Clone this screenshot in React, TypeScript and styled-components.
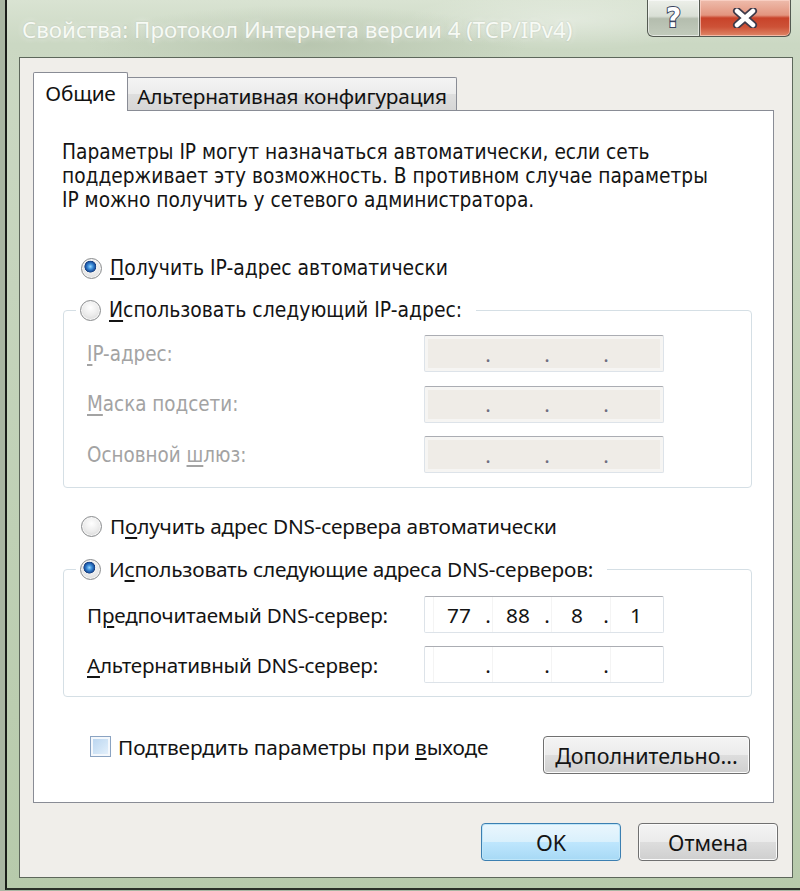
import React from "react";
import styled, { createGlobalStyle, css } from "styled-components";

const tahoma = `"DejaVu Sans Condensed", "DejaVu Sans", Verdana, sans-serif`;
const segoe = `"Noto Sans", "Open Sans", "Liberation Sans", sans-serif`;

const GlobalStyle = createGlobalStyle`
  html, body {
    margin: 0;
    padding: 0;
  }
  body {
    width: 800px;
    height: 891px;
    overflow: hidden;
    background: #a9b6a2;
  }
`;

const Window = styled.div`
  box-sizing: border-box;
  margin-left: 5px;
  width: 795px;
  height: 890px;
  padding-left: 12px;
  border-left: 2px solid #1b1e1a;
  border-bottom: 2px solid #2b3029;
  background:
    radial-gradient(ellipse 220px 40px at 300px 45px, rgba(150, 165, 140, 0.35), transparent),
    radial-gradient(ellipse 160px 30px at 560px 20px, rgba(255, 255, 255, 0.35), transparent),
    linear-gradient(180deg, #d9e3d2 0%, #cbd8c3 5%, #bfd0b5 60%, #b7caab 100%);
  display: flex;
  flex-direction: column;
`;

const TitleBar = styled.div`
  height: 57px;
  display: flex;
  align-items: flex-start;
`;

const Title = styled.div`
  margin: 16px 0 0 3px;
  font-family: ${segoe};
  font-size: 22.3px;
  line-height: 28px;
  color: #f7faf5;
  text-shadow: 0 0 6px rgba(255, 255, 255, 0.7), 0 0 2px rgba(120, 140, 115, 0.5);
  white-space: nowrap;
`;

const CaptionButtons = styled.div`
  margin-left: auto;
  margin-right: 9px;
  display: flex;
  height: 37px;
`;

const CaptionButton = styled.div<{ $close?: boolean }>`
  box-sizing: border-box;
  height: 37px;
  display: flex;
  align-items: center;
  justify-content: center;
  border: 1px solid #545a52;
  border-top: none;
  ${({ $close }) =>
    $close
      ? css`
          width: 91px;
          border-left: none;
          border-radius: 0 0 6px 0;
          background: linear-gradient(
            180deg,
            #eebcac 0%,
            #e3957f 42%,
            #c8432a 50%,
            #cd5237 75%,
            #df8667 100%
          );
          box-shadow: inset 0 0 0 1px rgba(255, 220, 210, 0.6);
        `
      : css`
          width: 53px;
          border-radius: 0 0 0 6px;
          background: linear-gradient(
            180deg,
            #edf0ea 0%,
            #d9dfd5 45%,
            #b4bdae 52%,
            #c2cbbc 100%
          );
          box-shadow: inset 0 0 0 1px rgba(255, 255, 255, 0.55);
        `}
`;

const HelpGlyph = styled.span`
  font-family: "DejaVu Sans", sans-serif;
  font-weight: bold;
  font-size: 26px;
  color: #fff;
  -webkit-text-stroke: 2px #3a4560;
  paint-order: stroke fill;
`;

const Content = styled.div`
  box-sizing: border-box;
  width: 774px;
  height: 821px;
  border: 1px solid #5d675b;
  background: #f0eeea;
  padding: 14px 18px 0 13px;
  display: flex;
  flex-direction: column;
`;

const TabStrip = styled.div`
  height: 38px;
  display: flex;
  align-items: flex-end;
`;

const Tab = styled.div<{ $active?: boolean }>`
  box-sizing: border-box;
  display: flex;
  align-items: center;
  justify-content: center;
  font-family: ${segoe};
  font-size: 20.8px;
  letter-spacing: -0.2px;
  color: #111;
  border: 1px solid #898c95;
  border-bottom: none;
  ${({ $active }) =>
    $active
      ? css`
          position: relative;
          z-index: 1;
          width: 95px;
          height: 39px;
          margin-bottom: -1px;
          padding-top: 2px;
          background: #fff;
          border-radius: 2px 2px 0 0;
        `
      : css`
          width: 329px;
          height: 33px;
          padding-top: 4px;
          border-left: none;
          border-radius: 0 2px 0 0;
          background: linear-gradient(180deg, #f4f4f4 0%, #ececec 50%, #dedede 51%, #d6d6d6 100%);
        `}
`;

const TabPanel = styled.div`
  box-sizing: border-box;
  height: 693px;
  border: 1px solid #898c95;
  background: #fff;
  padding: 29px 21px 0 29px;
  display: flex;
  flex-direction: column;
`;

const Intro = styled.p`
  margin: 0 0 0 -1px;
  font-family: ${tahoma};
  font-size: 20.7px;
  line-height: 24px;
  color: #141414;
`;

const RadioRow = styled.label<{ $top?: number; $segoe?: boolean }>`
  display: flex;
  align-items: center;
  gap: 8px;
  height: 24px;
  margin-top: ${({ $top }) => $top ?? 0}px;
  margin-left: 18px;
  font-family: ${({ $segoe }) => ($segoe ? segoe : tahoma)};
  font-size: ${({ $segoe }) => ($segoe ? "20.8px" : "20.9px")};
  letter-spacing: ${({ $segoe }) => ($segoe ? "-0.2px" : "0")};
  color: #141414;
  white-space: nowrap;
`;

const RadioDot = styled.span<{ $checked?: boolean }>`
  flex: none;
  box-sizing: border-box;
  width: 21px;
  height: 21px;
  border-radius: 50%;
  border: 1px solid #8a8c8e;
  box-shadow: inset 0 0 0 1px #f6f6f6;
  background: ${({ $checked }) =>
    $checked
      ? `radial-gradient(circle at 44% 40%, #9ad8ff 0, #3d8fdb 2.5px, #1a4f9c 5px, #143c7a 5.6px, rgba(20,60,122,0) 6.2px),
         radial-gradient(circle at 50% 40%, #ffffff 0, #e9e9e9 55%, #cdcdcd 100%)`
      : `radial-gradient(circle at 50% 35%, #ffffff 0, #ececec 50%, #cfcfcf 100%)`};
`;

const Group = styled.fieldset<{ $top: number; $pt: number; $pb: number }>`
  margin: ${({ $top }) => $top}px 0 0 0;
  padding: ${({ $pt, $pb }) => `${$pt}px 0 ${$pb}px 23px`};
  min-width: 0;
  border: 1px solid #d5dfe5;
  border-radius: 4px;
`;

const Legend = styled.legend`
  margin-left: -11px;
  padding: 0 14px 0 0;

  ${RadioRow} {
    margin-left: 0;
    padding-left: 4px;
  }
`;

const FieldGrid = styled.div<{ $gap: number }>`
  display: grid;
  grid-template-columns: 337px 240px;
  row-gap: ${({ $gap }) => $gap}px;
  align-items: center;
`;

const FieldLabel = styled.span<{ $disabled?: boolean }>`
  font-family: ${({ $disabled }) => ($disabled ? tahoma : segoe)};
  font-size: ${({ $disabled }) => ($disabled ? "20.4px" : "20.6px")};
  letter-spacing: ${({ $disabled }) => ($disabled ? "0" : "-0.2px")};
  color: ${({ $disabled }) => ($disabled ? "#a3a3a3" : "#141414")};
  white-space: nowrap;
`;

const IpBox = styled.div<{ $disabled?: boolean }>`
  box-sizing: border-box;
  width: 240px;
  height: 37px;
  padding-left: 8px;
  display: flex;
  align-items: center;
  border: 1px solid #dde3e9;
  border-top-color: #abadb3;
  border-radius: 2px;
  font-family: ${segoe};
  font-size: 20.8px;
  color: ${({ $disabled }) => ($disabled ? "#6e6e80" : "#141414")};
  background: ${({ $disabled }) => ($disabled ? "#efece7" : "#fff")};
  box-shadow: ${({ $disabled }) => ($disabled ? "inset 0 0 0 3px #f6f5f3" : "none")};
`;

const Octet = styled.span<{ $disabled?: boolean }>`
  width: 50px;
  align-self: stretch;
  display: flex;
  align-items: center;
  justify-content: center;
  border-left: 1px solid ${({ $disabled }) => ($disabled ? "transparent" : "#f4f4f4")};
`;

const Dot = styled.span`
  width: 8px;
  text-align: center;
`;

const BottomRow = styled.div`
  margin-top: 38px;
  display: flex;
  align-items: flex-start;
`;

const CheckLabel = styled.label`
  margin-left: 27px;
  display: flex;
  align-items: center;
  gap: 7px;
  height: 23px;
  font-family: ${segoe};
  font-size: 20.8px;
  letter-spacing: -0.1px;
  color: #141414;
  white-space: nowrap;
`;

const CheckBox = styled.span`
  flex: none;
  box-sizing: border-box;
  width: 21px;
  height: 21px;
  border: 1px solid #8aa3c2;
  box-shadow: inset 0 0 0 2px #f4f8fc;
  background: linear-gradient(135deg, #b7d3ee 0%, #d3e6f7 60%, #e9f3fc 100%);
`;

const Button = styled.button<{ $default?: boolean; $w: number }>`
  box-sizing: border-box;
  width: ${({ $w }) => $w}px;
  height: 38px;
  padding: 0;
  font-family: ${segoe};
  font-size: 21.5px;
  color: #141414;
  border-radius: 4px;
  border: 1px solid ${({ $default }) => ($default ? "#3c7fb1" : "#707070")};
  background: ${({ $default }) =>
    $default
      ? "linear-gradient(180deg, #eaf6fd 0%, #d9f0fc 50%, #bee6fd 51%, #a7d9f5 100%)"
      : "linear-gradient(180deg, #f4f4f4 0%, #ebebeb 50%, #dddddd 51%, #cfcfcf 100%)"};
  box-shadow: inset 0 0 0 1px ${({ $default }) => ($default ? "#bfe6f9" : "#fbfbfb")};
`;

const MoreButton = styled(Button)`
  margin-left: auto;
  margin-top: 1px;
  margin-right: 2px;
`;

const DialogButtons = styled.div`
  margin-top: 20px;
  margin-right: -4px;
  display: flex;
  justify-content: flex-end;
  gap: 17px;
`;

const Key = styled.u`
  text-decoration-thickness: 2px;
  text-underline-offset: 3px;
`;

function CloseGlyph() {
  return (
    <svg width="26" height="20" viewBox="0 0 26 20">
      <path d="M5 3 L21 17 M21 3 L5 17" stroke="#3d3a4a" strokeWidth="8" strokeLinecap="round" />
      <path d="M5 3 L21 17 M21 3 L5 17" stroke="#ffffff" strokeWidth="4.5" strokeLinecap="round" />
    </svg>
  );
}

function IpField({ values, disabled }: { values?: string[]; disabled?: boolean }) {
  const parts = values ?? ["", "", "", ""];
  return (
    <IpBox $disabled={disabled}>
      {parts.map((v, i) => (
        <React.Fragment key={i}>
          {i > 0 && <Dot>.</Dot>}
          <Octet $disabled={disabled}>{v}</Octet>
        </React.Fragment>
      ))}
    </IpBox>
  );
}

export default function App() {
  return (
    <>
      <GlobalStyle />
      <Window>
        <TitleBar>
          <Title>Свойства: Протокол Интернета версии 4 (TCP/IPv4)</Title>
          <CaptionButtons>
            <CaptionButton>
              <HelpGlyph>?</HelpGlyph>
            </CaptionButton>
            <CaptionButton $close>
              <CloseGlyph />
            </CaptionButton>
          </CaptionButtons>
        </TitleBar>

        <Content>
          <TabStrip>
            <Tab $active>Общие</Tab>
            <Tab>Альтернативная конфигурация</Tab>
          </TabStrip>

          <TabPanel>
            <Intro>
              Параметры IP могут назначаться автоматически, если сеть
              <br />
              поддерживает эту возможность. В противном случае параметры
              <br />
              IP можно получить у сетевого администратора.
            </Intro>

            <RadioRow $top={44}>
              <RadioDot $checked />
              <span>
                <Key>П</Key>олучить IP-адрес автоматически
              </span>
            </RadioRow>

            <Group $top={18} $pt={13} $pb={14}>
              <Legend>
                <RadioRow>
                  <RadioDot />
                  <span>
                    <Key>И</Key>спользовать следующий IP-адрес:
                  </span>
                </RadioRow>
              </Legend>
              <FieldGrid $gap={13.5}>
                <FieldLabel $disabled>
                  <Key>I</Key>P-адрес:
                </FieldLabel>
                <IpField disabled />
                <FieldLabel $disabled>
                  <Key>М</Key>аска подсети:
                </FieldLabel>
                <IpField disabled />
                <FieldLabel $disabled>
                  Основной <Key>ш</Key>люз:
                </FieldLabel>
                <IpField disabled />
              </FieldGrid>
            </Group>

            <RadioRow $top={26} $segoe>
              <RadioDot />
              <span>
                П<Key>о</Key>лучить адрес DNS-сервера автоматически
              </span>
            </RadioRow>

            <Group $top={19} $pt={15} $pb={13}>
              <Legend>
                <RadioRow $segoe>
                  <RadioDot $checked />
                  <span>
                    И<Key>с</Key>пользовать следующие адреса DNS-серверов:
                  </span>
                </RadioRow>
              </Legend>
              <FieldGrid $gap={13}>
                <FieldLabel>
                  П<Key>р</Key>едпочитаемый DNS-сервер:
                </FieldLabel>
                <IpField values={["77", "88", "8", "1"]} />
                <FieldLabel>
                  <Key>А</Key>льтернативный DNS-сервер:
                </FieldLabel>
                <IpField />
              </FieldGrid>
            </Group>

            <BottomRow>
              <CheckLabel>
                <CheckBox />
                <span>
                  Подтвердить параметры при <Key>в</Key>ыходе
                </span>
              </CheckLabel>
              <MoreButton $w={207}>
                <Key>Д</Key>ополнительно...
              </MoreButton>
            </BottomRow>
          </TabPanel>

          <DialogButtons>
            <Button $default $w={140}>
              OK
            </Button>
            <Button $w={140}>Отмена</Button>
          </DialogButtons>
        </Content>
      </Window>
    </>
  );
}
